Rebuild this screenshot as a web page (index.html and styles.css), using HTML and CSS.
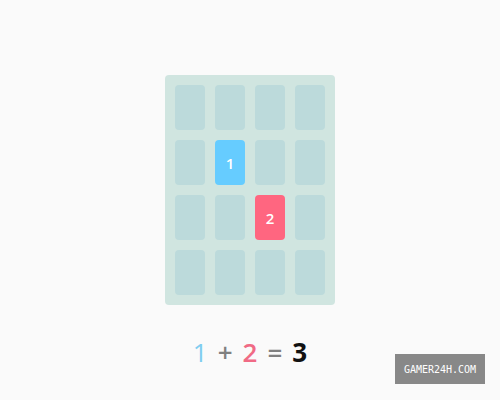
FILE: index.html
```html
<!DOCTYPE html>
<html>
<head>
<meta charset="utf-8">
<link rel="stylesheet" href="styles.css">
</head>
<body>
<div class="page">
  <div class="board">
    <div class="cell"></div><div class="cell"></div><div class="cell"></div><div class="cell"></div>
    <div class="cell"></div><div class="cell tile blue">1</div><div class="cell"></div><div class="cell"></div>
    <div class="cell"></div><div class="cell"></div><div class="cell tile red">2</div><div class="cell"></div>
    <div class="cell"></div><div class="cell"></div><div class="cell"></div><div class="cell"></div>
  </div>
  <div class="equation">
    <span class="one">1</span>
    <span class="op">+</span>
    <span class="two">2</span>
    <span class="op">=</span>
    <span class="three">3</span>
  </div>
</div>
<div class="watermark">GAMER24H.COM</div>
</body>
</html>
```
FILE: styles.css
```css
html, body {
  margin: 0;
  padding: 0;
  background: #fafafa;
  width: 500px;
  height: 400px;
  overflow: hidden;
}
.page {
  display: flex;
  flex-direction: column;
  align-items: center;
  padding-top: 75px;
}
.board {
  display: grid;
  grid-template-columns: repeat(4, 30px);
  grid-template-rows: repeat(4, 45px);
  gap: 10px;
  padding: 10px;
  background: #d0e5e0;
  border-radius: 4px;
}
.cell {
  background: #bcdadb;
  border-radius: 4px;
}
.tile {
  display: flex;
  align-items: center;
  justify-content: center;
  color: #fff;
  font-family: "Open Sans", sans-serif;
  font-weight: 600;
  font-size: 15px;
}
.blue { background: #66ccff; }
.red { background: #ff6680; }
.equation {
  margin-top: 30px;
  display: flex;
  gap: 10px;
  font-family: "Open Sans", sans-serif;
  font-weight: 600;
  font-size: 26px;
  line-height: 34px;
}
.one { color: #7fcdf0; font-weight: 400; }
.op { color: #808080; }
.two { color: #f06a85; }
.three { color: #111; font-weight: 700; }
.watermark {
  position: absolute;
  left: 395px;
  top: 354px;
  width: 90px;
  height: 30px;
  background: #888;
  color: #fff;
  font-family: "DejaVu Sans Mono", monospace;
  font-size: 10px;
  display: flex;
  align-items: center;
  justify-content: center;
}
```
